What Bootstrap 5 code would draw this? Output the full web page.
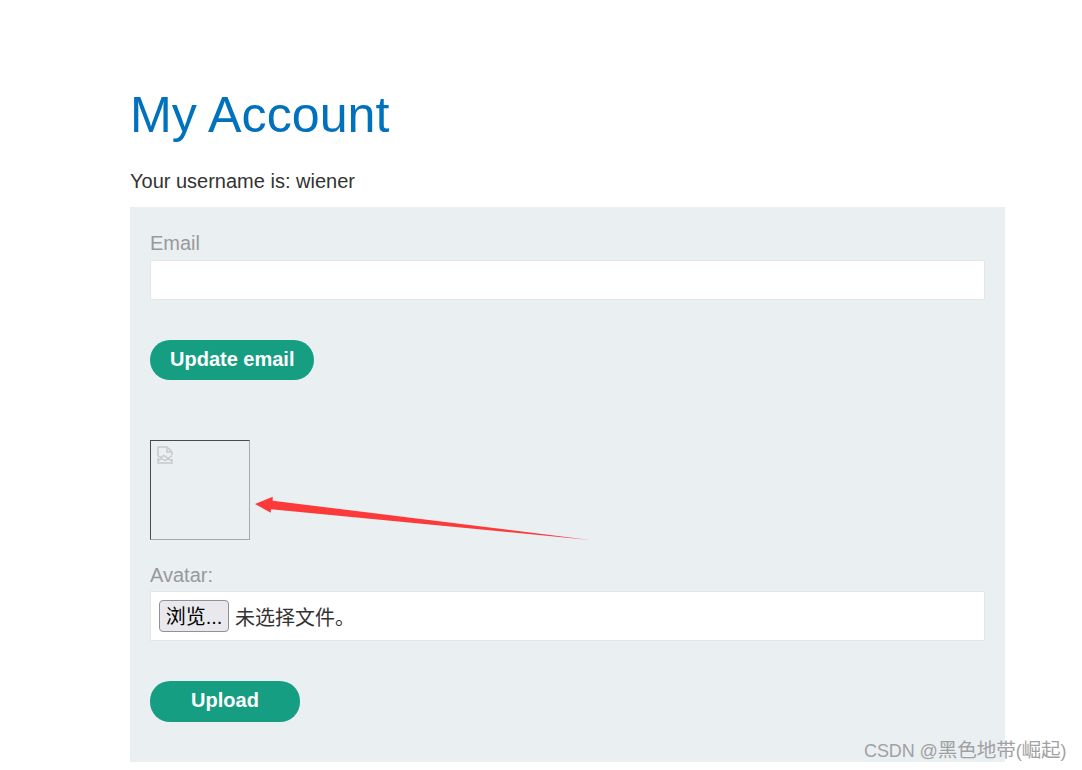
<!DOCTYPE html>
<html lang="zh">
<head>
<meta charset="utf-8">
<title>My Account</title>
<link href="https://cdn.jsdelivr.net/npm/bootstrap@5.3.0/dist/css/bootstrap.min.css" rel="stylesheet">
<style>
html,body{background:#fff;}
body{font-family:"Liberation Sans",Arial,"Noto Sans CJK SC",sans-serif;font-size:20px;color:#333332;height:770px;overflow:hidden;position:relative;}
.page-wrap{width:875px;margin-left:130px;padding-top:85px;}
.page-title{font-size:50.2px;line-height:60px;font-weight:400;color:#0071bc;margin:0 0 23px;font-family:"Liberation Sans",Arial,sans-serif;}
.user-line{font-size:20px;line-height:26px;margin:0 0 13px;}
.panel-box{background:#eaeff2;padding:24px 20px 40px;height:555px;}
.field-label{display:block;color:#999;font-size:20px;line-height:24px;margin:0 0 5px;}
.email-input{display:block;width:100%;height:40px;background:#fff;border:1px solid #e6e6e6;padding:0 8px;font-size:18px;outline:0;}
.pill-btn{background:#159e82;color:#fff;border:0;border-radius:20px;font-family:inherit;font-size:20px;font-weight:700;height:40px;line-height:37px;padding:0 20px 2px;}
.pill-btn:hover,.pill-btn:active{background:#159e82!important;color:#fff!important;}
.email-btn{margin-top:40px;display:block;}
.avatar-frame{width:100px;height:100px;margin-top:60px;border:1px solid;border-color:#4a4a4a #a9a9a9 #a9a9a9 #4a4a4a;padding:5px 6px;}
.avatar-frame svg{display:block;}
.avatar-label{margin-top:23px;font-size:20px;line-height:24px;margin-bottom:4px;}
.file-row{height:50px;background:#fff;border:1px solid #e6e6e6;padding:0 8px;font-size:20px;color:#333;}
.file-name{position:relative;top:2px;}
.browse-btn{width:70px;height:32px;padding:2px 0 0;background:#e9e9ed;border:1px solid #8f8f9d;border-radius:4px;color:#000;font-size:20px;line-height:26px;font-family:"Liberation Sans","Noto Sans CJK SC",sans-serif;margin-right:6px;}
.upload-btn{margin-top:40px;display:block;width:150px;padding:0 0 2px;height:41px;}
.arrow-mark{position:absolute;left:250px;top:490px;}
.csdn-mark{position:absolute;left:864px;top:738px;font-size:18px;line-height:24px;color:#999;letter-spacing:-.1px;white-space:nowrap;font-family:"Liberation Sans","Noto Sans CJK SC",sans-serif;opacity:.9;}
.csdn-cjk{font-size:19.6px;}
</style>
</head>
<body>
<div class="page-wrap">
  <h1 class="page-title">My Account</h1>
  <p class="user-line">Your username is: wiener</p>
  <div class="panel-box">
    <form>
      <label class="field-label" for="em">Email</label>
      <input class="email-input" id="em" type="email">
      <button class="btn pill-btn email-btn" type="button">Update email</button>
    </form>
    <div class="avatar-frame">
      <svg width="16" height="18" viewBox="0 0 16 18" fill="none" stroke="#c9c9c9" stroke-width="1.5">
        <path d="M1 10V1h9l5 5v3"/><path d="M10 1v5h5"/>
        <path d="M1 10l3 1.500 3-2 4 3 4-3"/>
        <path d="M1 12v5h14v-4"/>
        <path d="M1 14.500l4-2 3 2 3-1.500 4 1.500"/>
      </svg>
    </div>
    <form>
      <label class="field-label avatar-label">Avatar:</label>
      <div class="file-row d-flex align-items-center">
        <button class="browse-btn" type="button">浏览...</button><span class="file-name">未选择文件。</span>
      </div>
      <button class="btn pill-btn upload-btn" type="button">Upload</button>
    </form>
  </div>
</div>
<svg class="arrow-mark" width="345" height="55" viewBox="250 490 345 55">
  <path d="M255 504 L272.700 496.700 L272.700 500.700 L590 540 L271 509.300 L270.700 512.700 Z" fill="#fd3a3a"/>
</svg>
<div class="csdn-mark">CSDN @<span class="csdn-cjk">黑色地带</span>(<span class="csdn-cjk">崛起</span>)</div>
</body>
</html>
